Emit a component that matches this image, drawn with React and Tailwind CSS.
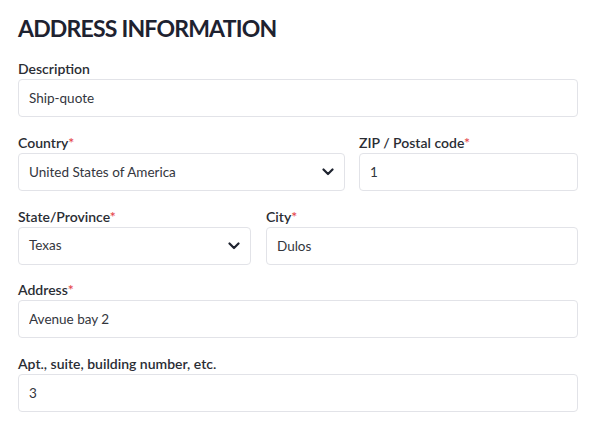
import { useState } from 'react'

function Chevron() {
  return (
    <svg width="12" height="8" viewBox="0 0 12 8" fill="none" className="shrink-0">
      <path d="M1.5 1.5L6 6L10.5 1.5" stroke="#1f2430" strokeWidth="2.2" strokeLinecap="round" strokeLinejoin="round" />
    </svg>
  )
}

function Label({ children, required }) {
  return (
    <label className="block text-[14px] leading-[17px] font-semibold text-[#2a2d34] mb-[2px]">
      {children}
      {required && <span className="text-[#e5484d]">*</span>}
    </label>
  )
}

function TextField({ label, required, value }) {
  const [val, setVal] = useState(value)
  return (
    <div>
      <Label required={required}>{label}</Label>
      <input
        value={val}
        onChange={e => setVal(e.target.value)}
        className="w-full h-[38px] px-[10px] border border-[#e2e3e8] rounded-[4px] text-[13.5px] text-[#33363d] bg-white outline-none"
      />
    </div>
  )
}

function SelectField({ label, required, value }) {
  return (
    <div>
      <Label required={required}>{label}</Label>
      <div className="w-full h-[38px] pl-[10px] pr-[10px] border border-[#e2e3e8] rounded-[4px] flex items-center justify-between bg-white">
        <span className="text-[13.5px] text-[#33363d]">{value}</span>
        <Chevron />
      </div>
    </div>
  )
}

export default function App() {
  return (
    <div className="w-[596px] h-[427px] bg-white px-[18px] pt-[14px]" style={{ fontFamily: 'Lato, "Noto Sans", sans-serif' }}>
      <h1 className="text-[23px] leading-[29px] font-bold tracking-[-0.8px] text-[#1e2230] mb-[17px]">ADDRESS INFORMATION</h1>
      <div className="flex flex-col gap-[16.75px]">
        <TextField label="Description" value="Ship-quote" />
        <div className="grid grid-cols-[327px_1fr] gap-[14px]">
          <SelectField label="Country" required value="United States of America" />
          <TextField label="ZIP / Postal code" required value="1" />
        </div>
        <div className="grid grid-cols-[233px_1fr] gap-[15px]">
          <SelectField label="State/Province" required value="Texas" />
          <TextField label="City" required value="Dulos" />
        </div>
        <TextField label="Address" required value="Avenue bay 2" />
        <TextField label="Apt., suite, building number, etc." value="3" />
      </div>
    </div>
  )
}
